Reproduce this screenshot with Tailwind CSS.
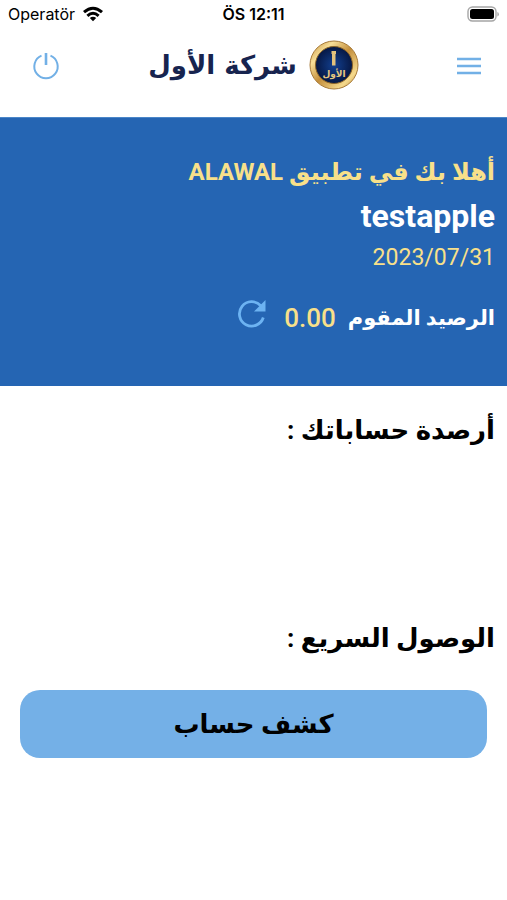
<!DOCTYPE html>
<html lang="ar" dir="rtl">
<head>
    <meta charset="UTF-8">
    <meta name="viewport" content="width=device-width, initial-scale=1.0">
    <title>شركة الأول</title>
    <script src="https://cdn.jsdelivr.net/npm/@tailwindcss/browser@4"></script>
</head>
<body class="bg-white text-black font-['Roboto','DejaVu_Sans',sans-serif]">
    <div class="min-h-screen flex flex-col">
        <!-- Status bar -->
        <div dir="ltr" class="grid grid-cols-3 items-center h-7 px-2 font-['Inter',sans-serif] text-base">
            <div class="flex items-center gap-2">
                <span>Operatör</span>
                <svg class="w-5 h-4" viewBox="0 0 20 16" fill="none" stroke="#000" stroke-width="3" aria-hidden="true">
                    <path d="M1 6.2Q10-1.8 19 6.2"/>
                    <path d="M4.4 9.8Q10 4.8 15.6 9.8"/>
                    <path d="M10 15.2L6.8 12Q10 9.3 13.2 12Z" fill="#000" stroke="none"/>
                </svg>
            </div>
            <span class="text-center font-semibold">ÖS 12:11</span>
            <svg class="justify-self-end w-8 h-4" viewBox="0 0 32 16" aria-hidden="true">
                <rect x="1" y="1" width="28" height="14" rx="4.5" fill="#fff" stroke="#a5a5a5" stroke-width="1.4"/>
                <rect x="3" y="3" width="24" height="10" rx="2.5"/>
                <path d="M30.4 6v4.5q1.5-.5 1.5-2.2T30.4 6z" fill="#a5a5a5"/>
            </svg>
        </div>

        <!-- Header -->
        <header class="flex items-start justify-between h-[89px] px-6 pt-3">
            <button type="button" aria-label="القائمة" class="w-11 h-[52px] flex items-center justify-start ps-0.5">
                <svg class="w-6 h-5" viewBox="0 0 24 20" stroke="#72b0e6" stroke-width="2.6">
                    <path d="M0 3h24M0 10h24M0 17h24"/>
                </svg>
            </button>
            <a href="#" class="flex items-center gap-3 text-[#17244f]">
                <svg class="w-[50px] h-[50px]" viewBox="0 0 50 50" aria-hidden="true">
                    <defs>
                        <linearGradient id="gold" x1="0" y1="0" x2="1" y2="1">
                            <stop offset="0" stop-color="#c08a35"/>
                            <stop offset=".25" stop-color="#f8df98"/>
                            <stop offset=".5" stop-color="#c48f3c"/>
                            <stop offset=".8" stop-color="#f5d98c"/>
                            <stop offset="1" stop-color="#ae7a2e"/>
                        </linearGradient>
                        <radialGradient id="navy">
                            <stop offset="0" stop-color="#124090"/>
                            <stop offset="1" stop-color="#061743"/>
                        </radialGradient>
                    </defs>
                    <circle cx="25" cy="25" r="24" fill="url(#gold)" stroke="#a87b3a"/>
                    <circle cx="25" cy="25" r="18.5" fill="url(#navy)" stroke="#8a6428"/>
                    <path d="M22.5 11h4.5v3h-.5V25.5h-3.500V14h-.5z" fill="#e3c27c"/>
                    <text x="25" y="37" text-anchor="middle" font-size="9" font-weight="700" font-family="DejaVu Sans" fill="#e6c780">الأول</text>
                </svg>
                <span class="text-[26px] font-bold font-['DejaVu_Sans',sans-serif]">شركة الأول</span>
            </a>
            <button type="button" aria-label="تسجيل الخروج" class="w-11 h-[52px] flex items-center justify-center">
                <svg class="w-7 h-7" viewBox="0 0 28 28" fill="none" stroke="#72b0e6" stroke-width="2">
                    <path d="M9.5 3.7A11.7 11.7 0 1 0 18.5 3.7"/>
                    <path d="M14 1v12" stroke-width="2.6"/>
                </svg>
            </button>
        </header>

        <!-- Welcome panel -->
        <section class="flex flex-col items-start bg-[#2565b3] border-t border-[#4a86c8] text-[#f8e08a] px-3 pt-9 pb-12">
            <p class="text-2xl leading-9 font-bold">أهلا بك في تطبيق ALAWAL</p>
            <h1 class="text-[32px] leading-[52px] font-bold text-white">testapple</h1>
            <time datetime="2023-07-31" dir="ltr" class="text-[23px] leading-8">2023/07/31</time>
            <div class="flex items-center gap-3 mt-6">
                <span class="text-[21px] leading-10 font-bold text-white">الرصيد المقوم</span>
                <span class="text-[26px] leading-10 font-medium">0.00</span>
                <button type="button" aria-label="تحديث الرصيد" class="ms-1 pb-2">
                    <svg class="w-8 h-8" viewBox="0 0 32 32" fill="none" stroke="#6db3f2" stroke-width="2.8">
                        <path d="M24.8 7.8A12.2 12.2 0 1 0 27.3 19.5"/>
                        <path d="M29.5 2v11.5H18z" fill="#6db3f2" stroke="none"/>
                    </svg>
                </button>
            </div>
        </section>

        <main class="flex flex-col grow">
            <section class="min-h-[208px] px-3 pt-5">
                <h2 class="text-[26px] leading-12 font-bold">أرصدة حساباتك :</h2>
            </section>
            <section class="px-3 pt-5">
                <h2 class="text-[26px] leading-12 font-bold">الوصول السريع :</h2>
                <div class="px-2 pt-7">
                    <button type="button" class="w-full h-[68px] rounded-[20px] bg-[#74b0e7] text-[26px] font-bold">كشف حساب</button>
                </div>
            </section>
        </main>
    </div>
</body>
</html>
